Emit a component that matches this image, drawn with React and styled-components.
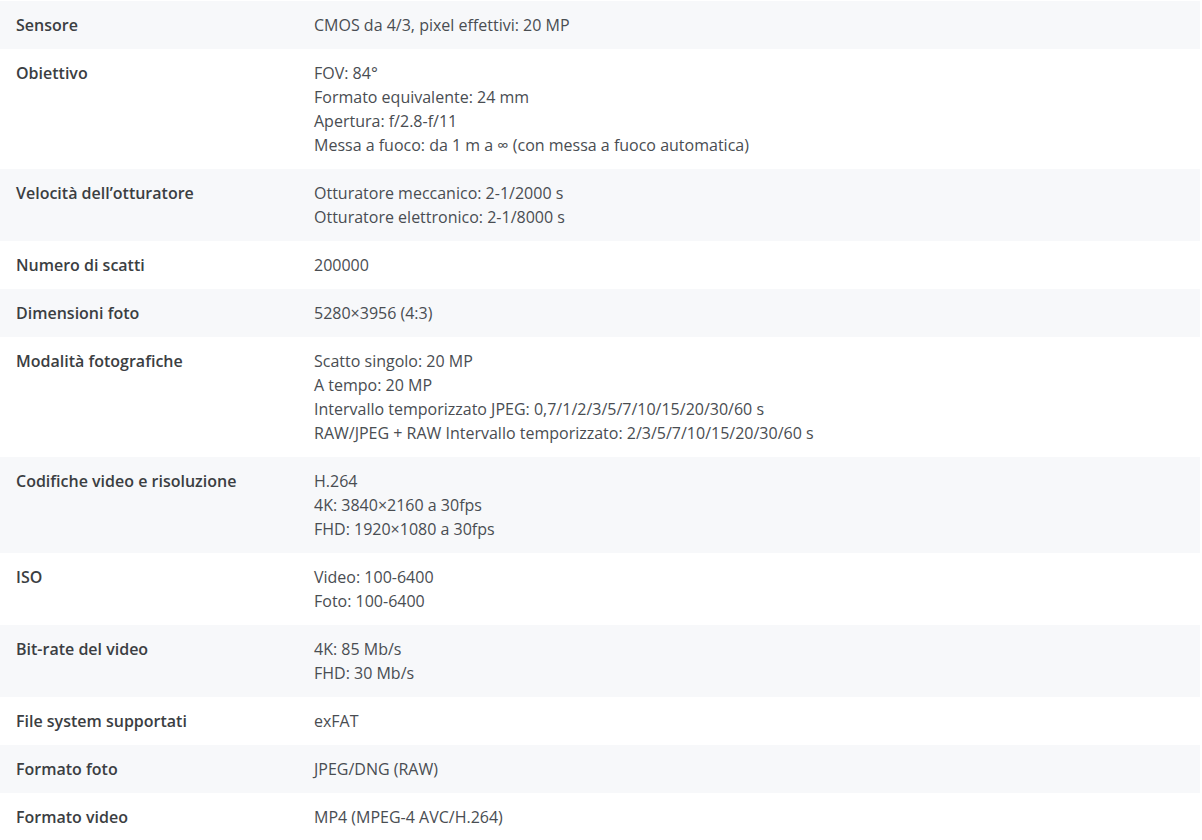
import React from 'react';
import styled, { createGlobalStyle } from 'styled-components';

const GlobalStyle = createGlobalStyle`
    body {
        margin: 0;
        background: #ffffff;
        font-family: "Open Sans", "Liberation Sans", sans-serif;
    }
`

const Table = styled.div`
    width: 1200px;
    padding-top: 1px;
`

const Row = styled.div`
    display: grid;
    grid-template-columns: 314px 1fr;
    background-color: ${({ striped }) => (striped ? '#f7f8fa' : '#ffffff')};
    font-size: 16px;
    line-height: 24px;
`

const Label = styled.div`
    padding: 12px 16px;
    font-weight: 600;
    color: #3b3e42;
`

const Value = styled.div`
    padding: 12px 0;
    color: #494d52;
`

const Line = styled.div``

const specs = [
    ['Sensore', ['CMOS da 4/3, pixel effettivi: 20 MP']],
    ['Obiettivo', ['FOV: 84°', 'Formato equivalente: 24 mm', 'Apertura: f/2.8-f/11', 'Messa a fuoco: da 1 m a ∞ (con messa a fuoco automatica)']],
    ['Velocità dell’otturatore', ['Otturatore meccanico: 2-1/2000 s', 'Otturatore elettronico: 2-1/8000 s']],
    ['Numero di scatti', ['200000']],
    ['Dimensioni foto', ['5280×3956 (4:3)']],
    ['Modalità fotografiche', ['Scatto singolo: 20 MP', 'A tempo: 20 MP', 'Intervallo temporizzato JPEG: 0,7/1/2/3/5/7/10/15/20/30/60 s', 'RAW/JPEG + RAW Intervallo temporizzato: 2/3/5/7/10/15/20/30/60 s']],
    ['Codifiche video e risoluzione', ['H.264', '4K: 3840×2160 a 30fps', 'FHD: 1920×1080 a 30fps']],
    ['ISO', ['Video: 100-6400', 'Foto: 100-6400']],
    ['Bit-rate del video', ['4K: 85 Mb/s', 'FHD: 30 Mb/s']],
    ['File system supportati', ['exFAT']],
    ['Formato foto', ['JPEG/DNG (RAW)']],
    ['Formato video', ['MP4 (MPEG-4 AVC/H.264)']],
]

const App = () => {
    return (
        <>
            <GlobalStyle />
            <Table>
                {specs.map(([label, lines], i) => (
                    <Row key={label} striped={i % 2 === 0}>
                        <Label>{label}</Label>
                        <Value>
                            {lines.map((l) => (
                                <Line key={l}>{l}</Line>
                            ))}
                        </Value>
                    </Row>
                ))}
            </Table>
        </>
    )
}
export default App;
